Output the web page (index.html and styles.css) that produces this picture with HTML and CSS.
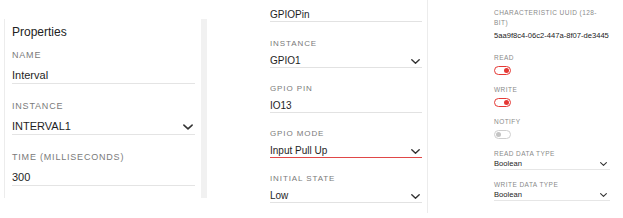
FILE: index.html
```html
<!DOCTYPE html>
<html>
<head>
<meta charset="utf-8">
<link rel="stylesheet" href="styles.css">
</head>
<body>
<div class="page">
  <section class="col1">
    <div class="col1-body">
      <div class="title">Properties</div>
      <div class="f1">
        <div class="l1">NAME</div>
        <div class="v1">Interval</div>
      </div>
      <div class="f1">
        <div class="l1">INSTANCE</div>
        <div class="v1"><span>INTERVAL1</span><svg class="chev c1" viewBox="0 0 9 5"><path d="M0.8 0.8 L4.5 4.2 L8.2 0.8"/></svg></div>
      </div>
      <div class="f1">
        <div class="l1">TIME (MILLISECONDS)</div>
        <div class="v1">300</div>
      </div>
    </div>
    <div class="col1-bar"></div>
  </section>

  <section class="col2">
    <div class="f2 first">
      <div class="v2">GPIOPin</div>
    </div>
    <div class="f2">
      <div class="l2">INSTANCE</div>
      <div class="v2"><span>GPIO1</span><svg class="chev c2" viewBox="0 0 9 5"><path d="M0.8 0.8 L4.5 4.2 L8.2 0.8"/></svg></div>
    </div>
    <div class="f2">
      <div class="l2">GPIO PIN</div>
      <div class="v2">IO13</div>
    </div>
    <div class="f2">
      <div class="l2">GPIO MODE</div>
      <div class="v2 error"><span>Input Pull Up</span><svg class="chev c2" viewBox="0 0 9 5"><path d="M0.8 0.8 L4.5 4.2 L8.2 0.8"/></svg></div>
    </div>
    <div class="f2">
      <div class="l2">INITIAL STATE</div>
      <div class="v2"><span>Low</span><svg class="chev c2" viewBox="0 0 9 5"><path d="M0.8 0.8 L4.5 4.2 L8.2 0.8"/></svg></div>
    </div>
  </section>

  <section class="col3">
    <div class="f3 uuid">
      <div class="l3">CHARACTERISTIC UUID (128-BIT)</div>
      <div class="v3 plain">5aa9f8c4-06c2-447a-8f07-de3445</div>
    </div>
    <div class="f3">
      <div class="l3">READ</div>
      <div class="toggle on"><span class="knob"></span></div>
    </div>
    <div class="f3">
      <div class="l3">WRITE</div>
      <div class="toggle on"><span class="knob"></span></div>
    </div>
    <div class="f3">
      <div class="l3">NOTIFY</div>
      <div class="toggle off"><span class="knob"></span></div>
    </div>
    <div class="f3">
      <div class="l3">READ DATA TYPE</div>
      <div class="v3"><span>Boolean</span><svg class="chev c3" viewBox="0 0 9 5"><path d="M0.8 0.8 L4.5 4.2 L8.2 0.8"/></svg></div>
    </div>
    <div class="f3">
      <div class="l3">WRITE DATA TYPE</div>
      <div class="v3"><span>Boolean</span><svg class="chev c3" viewBox="0 0 9 5"><path d="M0.8 0.8 L4.5 4.2 L8.2 0.8"/></svg></div>
    </div>
  </section>
</div>
</body>
</html>
```

FILE: styles.css
```css
html, body {
  margin: 0;
  padding: 0;
  background: #ffffff;
}
body {
  width: 623px;
  height: 218px;
  overflow: hidden;
  font-family: "Liberation Sans", Arial, sans-serif;
  color: #222222;
}
.page {
  display: flex;
  align-items: flex-start;
}

/* column 1 */
.col1 {
  margin: 19px 0 0 4px;
  width: 203px;
  height: 179px;
  border-left: 1px solid #ececec;
  display: flex;
  box-sizing: border-box;
}
.col1-body {
  flex: 1;
  padding: 5px 6px 0 7px;
}
.col1-bar {
  width: 6px;
  background: #f1f1f1;
}
.title {
  font-size: 12px;
  line-height: 16px;
  margin-bottom: 8px;
  color: #222;
}
.f1 {
  margin-bottom: 15px;
}
.l1 {
  font-size: 9px;
  line-height: 14px;
  letter-spacing: 0.8px;
  color: #7a7a7a;
  margin-bottom: 6px;
}
.v1 {
  font-size: 11px;
  line-height: 15px;
  color: #1e1e1e;
  border-bottom: 1px solid #e4e4e4;
  display: flex;
  justify-content: space-between;
  align-items: center;
}

.chev {
  fill: none;
  stroke: #333;
  stroke-width: 1.4;
  stroke-linecap: round;
  stroke-linejoin: round;
}
.c1 { width: 10px; height: 6px; margin-right: 2px; }
.c2 { width: 9px; height: 5px; margin-right: 2px; }
.c3 { width: 7px; height: 4px; margin-right: 3px; }

/* column 2 */
.col2 {
  margin-left: 63px;
  width: 152px;
  padding-top: 7px;
}
.f2 {
  margin-bottom: 15px;
}
.f2.first {
  margin-bottom: 16px;
}
.l2 {
  font-size: 8px;
  line-height: 12px;
  letter-spacing: 0.9px;
  color: #7a7a7a;
  margin-bottom: 3px;
}
.v2 {
  font-size: 10px;
  line-height: 12px;
  padding-top: 2px;
  color: #1e1e1e;
  border-bottom: 1px solid #e2e2e2;
  display: flex;
  justify-content: space-between;
  align-items: center;
}
.v2.error {
  border-bottom-color: #e04848;
}

/* column 3 */
.col3 {
  margin-left: 5px;
  height: 205px;
  border-left: 1px solid #ececec;
  padding: 8px 0 0 66px;
  width: 116px;
}
.f3 {
  margin-bottom: 10px;
}
.f3.uuid {
  margin-bottom: 12px;
}
.l3 {
  font-size: 6.5px;
  line-height: 10px;
  letter-spacing: 0.45px;
  color: #8a8a8a;
  width: 112px;
}
.v3 {
  font-size: 7.6px;
  line-height: 10px;
  color: #222;
  border-bottom: 1px solid #e6e6e6;
  display: flex;
  justify-content: space-between;
  align-items: center;
}
.v3.plain {
  margin-top: 3px;
  border-bottom: none;
  white-space: nowrap;
  overflow: hidden;
}
.toggle {
  margin-top: 3px;
  width: 17px;
  height: 9px;
  box-sizing: border-box;
  border-radius: 5px;
  border: 1.5px solid #e53935;
  display: flex;
  align-items: center;
  padding: 0 1px;
}
.toggle.on {
  justify-content: flex-end;
}
.toggle .knob {
  width: 5px;
  height: 5px;
  border-radius: 50%;
  background: #e53935;
}
.toggle.off {
  border-color: #cfcfcf;
  justify-content: flex-start;
}
.toggle.off .knob {
  background: #c4c4c4;
}
```
